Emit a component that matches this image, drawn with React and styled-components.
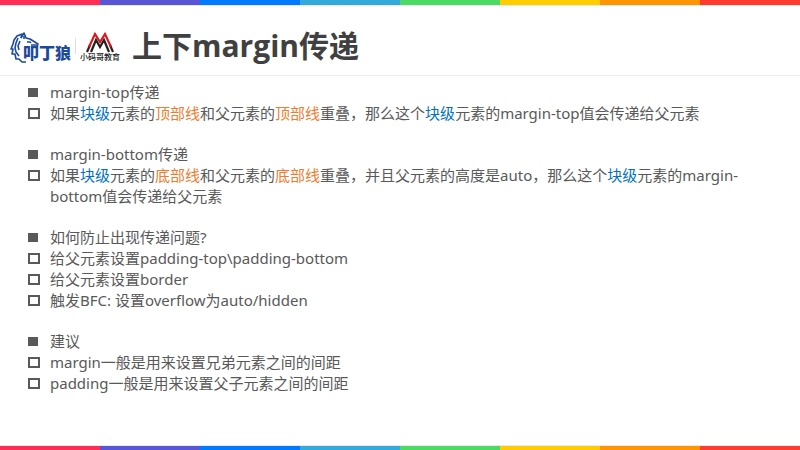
import React from "react";
import styled, { createGlobalStyle } from "styled-components";

const GlobalStyle = createGlobalStyle`
  *, *::before, *::after { box-sizing: border-box; }
  body { margin: 0; background: #fff; }
`;

const STRIPES = ["#ff2d55", "#5856d6", "#007aff", "#34aadc", "#4cd964", "#ffcc00", "#ff9500", "#ff3b30"];

const Slide = styled.div`
  min-height: 100vh;
  display: flex;
  flex-direction: column;
  color: #595959;
  font-family: "Noto Sans", "Noto Sans CJK SC", sans-serif;
`;

const StripeBar = styled.div`
  display: flex;
  height: ${(p) => (p.$bottom ? 5 : 6)}px;
  border: 0 solid #e8e8e8;
  border-width: ${(p) => (p.$bottom ? "1px 0 0" : "0 0 1px")};
`;

const Stripe = styled.span`
  flex: 1;
  background: ${(p) => p.$color};
`;

const Header = styled.header`
  display: flex;
  align-items: center;
  height: 70px;
  padding: 10px 10px 0;
  border-bottom: 1px solid #ececec;
`;

const WolfLogo = styled.svg`
  width: 64px;
  height: 34px;
  flex: none;
  overflow: visible;
`;

const Divider = styled.span`
  width: 1px;
  height: 16px;
  margin: 0 2px 0 1px;
  background: #dedede;
`;

const SchoolLogo = styled.svg`
  width: 44px;
  height: 34px;
  flex: none;
  overflow: visible;
`;

const Title = styled.h1`
  margin: 0 0 0 10px;
  color: #404040;
  font-family: "Open Sans", "Noto Sans CJK SC", sans-serif;
  font-size: 30px;
  line-height: 40px;
  font-weight: 700;
`;

const Content = styled.main`
  flex: 1;
  display: flex;
  flex-direction: column;
  gap: 20px;
  padding: 6px 48px 20px 28px;
`;

const Group = styled.ul`
  margin: 0;
  padding: 0;
  list-style: none;
`;

const Item = styled.li`
  display: grid;
  grid-template-columns: 22px 1fr;
  font-size: 15px;
  line-height: 21px;
`;

const SolidBullet = styled.span`
  width: 10px;
  height: 9px;
  margin-top: 6px;
  background: #595959;
`;

const BoxBullet = styled.span`
  width: 12px;
  height: 11px;
  margin-top: 5px;
  border: 2px solid #595959;
`;

const Blue = styled.span`
  color: #0070c0;
`;

const Orange = styled.span`
  color: #ed7d31;
`;

const Stripes = ({ bottom }) => (
  <StripeBar $bottom={bottom}>
    {STRIPES.map((c) => <Stripe key={c} $color={c} />)}
  </StripeBar>
);

const Topic = ({ children }) => <Item><SolidBullet /><span>{children}</span></Item>;
const Point = ({ children }) => <Item><BoxBullet /><span>{children}</span></Item>;

export default function App() {
  return (
    <Slide>
      <GlobalStyle />
      <Stripes />
      <Header>
        <WolfLogo viewBox="0 0 64 34" role="img" aria-label="叩丁狼">
          <g fill="none" stroke="#1b4a9c" strokeWidth="1.6" strokeLinejoin="round">
            <path d="M11 9 L14 4 L16 9 L20 10 L28 15 L27 18 L21 18" />
            <path d="M11 9 L12 5 L7 7 L4 11 L3 15 L1 20 L3 20 L2 25 L5 25 L6 30 L9 30 L12 33 L16 33" />
            <path d="M8 9 L6 14 L5 19 L6 23 L9 27 M14 7 L14 10 M17 13 L20 13 L21 14" />
            <path d="M10 12 L8 17 L9 21 M21 16 L27 16" />
          </g>
          <text x="13" y="30" fill="#1b4a9c" fontFamily="Noto Sans CJK SC" fontSize="16" fontWeight="900">叩丁狼</text>
        </WolfLogo>
        <Divider />
        <SchoolLogo viewBox="0 0 44 34" role="img" aria-label="小码哥教育">
          <g fill="none" strokeWidth="2.2" strokeLinejoin="miter">
            <path d="M9 23 L12 16 M35 23 L32 16" stroke="#3a1a1c" />
            <path d="M11 18 L17 5 L22 13 L27 5 L33 18" stroke="#d71920" />
            <path d="M13 23 L18 11 L22 18 L26 11 L31 23" stroke="#242021" />
          </g>
          <text x="2" y="31" fill="#242021" fontFamily="Noto Sans CJK SC" fontSize="8" fontWeight="500">小码哥教育</text>
        </SchoolLogo>
        <Title>上下margin传递</Title>
      </Header>
      <Content>
        <Group>
          <Topic>margin-top传递</Topic>
          <Point>如果<Blue>块级</Blue>元素的<Orange>顶部线</Orange>和父元素的<Orange>顶部线</Orange>重叠，那么这个<Blue>块级</Blue>元素的margin-top值会传递给父元素</Point>
        </Group>
        <Group>
          <Topic>margin-bottom传递</Topic>
          <Point>如果<Blue>块级</Blue>元素的<Orange>底部线</Orange>和父元素的<Orange>底部线</Orange>重叠，并且父元素的高度是auto，那么这个<Blue>块级</Blue>元素的margin-bottom值会传递给父元素</Point>
        </Group>
        <Group>
          <Topic>如何防止出现传递问题?</Topic>
          <Point>给父元素设置padding-top\padding-bottom</Point>
          <Point>给父元素设置border</Point>
          <Point>触发BFC: 设置overflow为auto/hidden</Point>
        </Group>
        <Group>
          <Topic>建议</Topic>
          <Point>margin一般是用来设置兄弟元素之间的间距</Point>
          <Point>padding一般是用来设置父子元素之间的间距</Point>
        </Group>
      </Content>
      <Stripes bottom />
    </Slide>
  );
}
